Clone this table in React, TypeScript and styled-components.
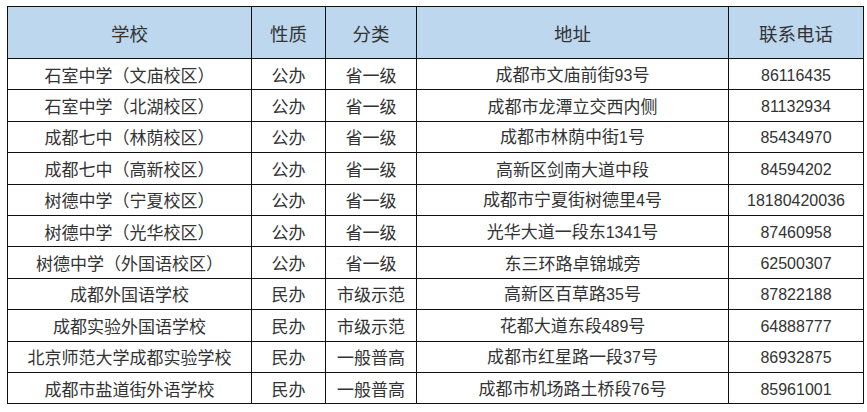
import React from "react";
import styled, { createGlobalStyle } from "styled-components";

const Global = createGlobalStyle`
  html, body { margin: 0; padding: 0; background: #ffffff; }
  body { font-family: "Noto Sans CJK SC", "Microsoft YaHei", sans-serif; }
`;

const Page = styled.div`
  padding: 6px 0 0 7px;
`;

const Table = styled.table`
  border-collapse: collapse;
  table-layout: fixed;
  width: 851px;
  color: #333333;
`;

const HeadCell = styled.th<{ $w: number }>`
  width: ${(p) => p.$w}px;
  height: 51px;
  background: #bdd7ee;
  border: 1px solid #111111;
  font-size: 18.5px;
  font-weight: 400;
  text-align: center;
  padding: 0;
`;

const Row = styled.tr`
  height: 31.4px;
`;

const Cell = styled.td`
  border: 1px solid #111111;
  font-size: 17px;
  text-align: center;
  padding: 0;
  line-height: 1;
  white-space: nowrap;
`;

const Num = styled.span`
  font-family: "Liberation Sans", Arial, sans-serif;
  font-size: 16px;
`;

const cols = [
  { title: "学校", w: 243 },
  { title: "性质", w: 73 },
  { title: "分类", w: 90 },
  { title: "地址", w: 311 },
  { title: "联系电话", w: 134 },
];

const rows: string[][] = [
  ["石室中学（文庙校区）", "公办", "省一级", "成都市文庙前街93号", "86116435"],
  ["石室中学（北湖校区）", "公办", "省一级", "成都市龙潭立交西内侧", "81132934"],
  ["成都七中（林荫校区）", "公办", "省一级", "成都市林荫中街1号", "85434970"],
  ["成都七中（高新校区）", "公办", "省一级", "高新区剑南大道中段", "84594202"],
  ["树德中学（宁夏校区）", "公办", "省一级", "成都市宁夏街树德里4号", "18180420036"],
  ["树德中学（光华校区）", "公办", "省一级", "光华大道一段东1341号", "87460958"],
  ["树德中学（外国语校区）", "公办", "省一级", "东三环路卓锦城旁", "62500307"],
  ["成都外国语学校", "民办", "市级示范", "高新区百草路35号", "87822188"],
  ["成都实验外国语学校", "民办", "市级示范", "花都大道东段489号", "64888777"],
  ["北京师范大学成都实验学校", "民办", "一般普高", "成都市红星路一段37号", "86932875"],
  ["成都市盐道街外语学校", "民办", "一般普高", "成都市机场路土桥段76号", "85961001"],
];

function Text({ value }: { value: string }) {
  const parts = value.split(/(\d+)/).filter((p) => p !== "");
  return (
    <>
      {parts.map((p, i) => (/^\d+$/.test(p) ? <Num key={i}>{p}</Num> : <React.Fragment key={i}>{p}</React.Fragment>))}
    </>
  );
}

export default function App() {
  return (
    <Page>
      <Global />
      <Table>
        <thead>
          <tr>
            {cols.map((c) => (
              <HeadCell key={c.title} $w={c.w}>
                {c.title}
              </HeadCell>
            ))}
          </tr>
        </thead>
        <tbody>
          {rows.map((r, i) => (
            <Row key={i}>
              {r.map((v, j) => (
                <Cell key={j}>
                  <Text value={v} />
                </Cell>
              ))}
            </Row>
          ))}
        </tbody>
      </Table>
    </Page>
  );
}
